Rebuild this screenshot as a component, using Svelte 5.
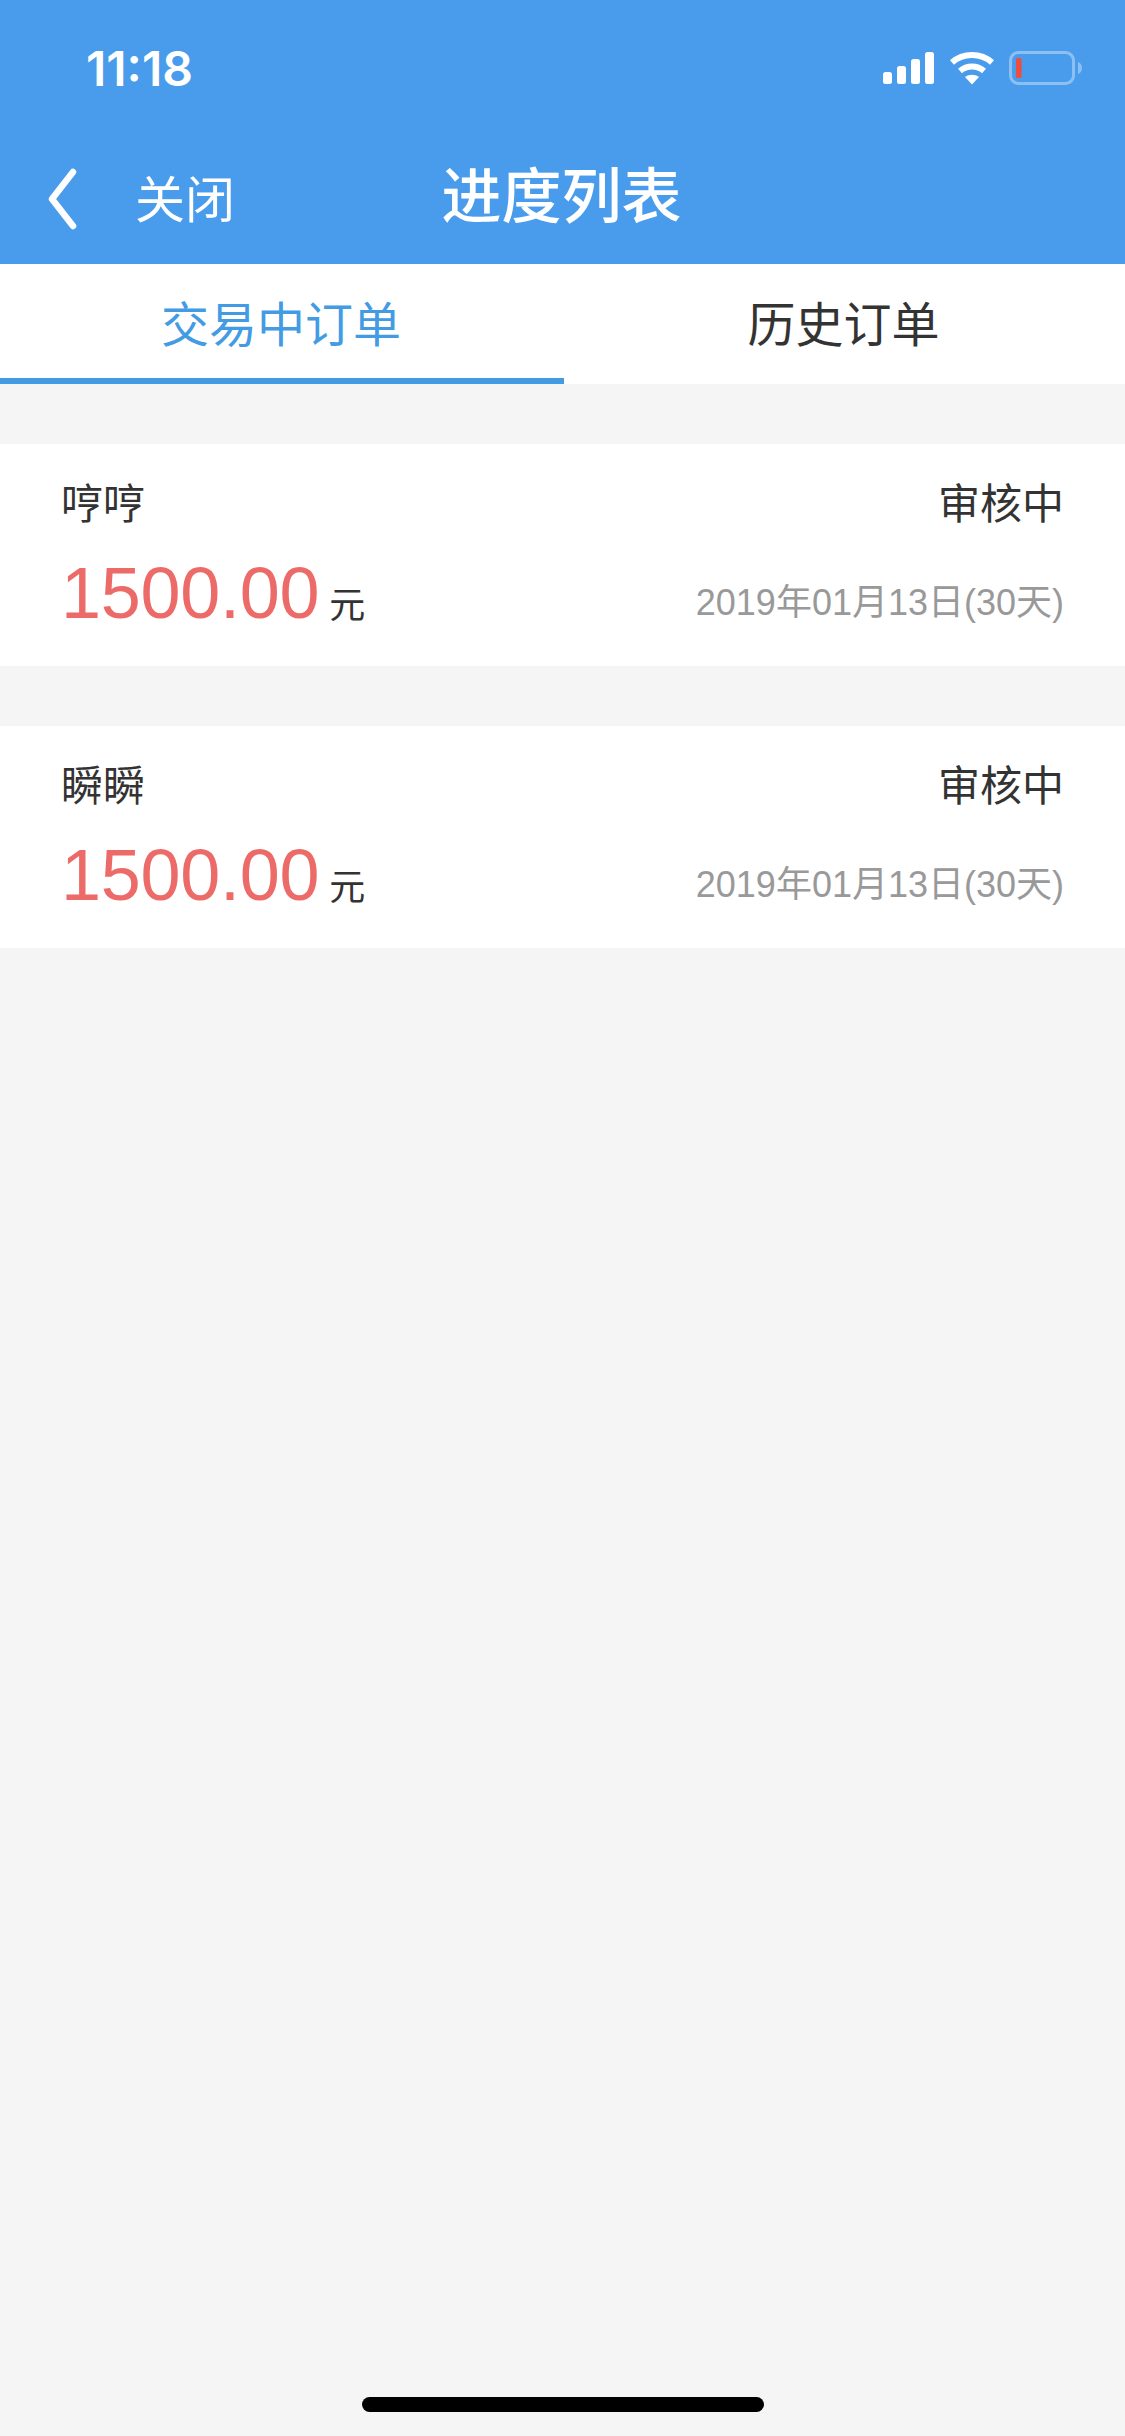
<script>
	const orders = [
		{ name: '哼哼', status: '审核中', amount: '1500.00', date: '2019年01月13日(30天)' },
		{ name: '瞬瞬', status: '审核中', amount: '1500.00', date: '2019年01月13日(30天)' }
	];
</script>

<div class="page">
	<header class="top">
		<div class="status">
			<span class="time">11:18</span>
			<div class="status-icons">
				<svg class="signal" width="52" height="32" viewBox="0 0 52 32">
					<rect x="0" y="20" width="9" height="12" rx="2.5" fill="#fff" />
					<rect x="14" y="14" width="9" height="18" rx="2.5" fill="#fff" />
					<rect x="28" y="7" width="9" height="25" rx="2.5" fill="#fff" />
					<rect x="42" y="0" width="9" height="32" rx="2.5" fill="#fff" />
				</svg>
				<svg class="wifi" width="46" height="34" viewBox="0 0 46 34">
					<path d="M3 11.5 C14 1.5 32 1.5 43 11.5" fill="none" stroke="#fff" stroke-width="6" />
					<path d="M11 20 C18 14 28 14 35 20" fill="none" stroke="#fff" stroke-width="6" />
					<path d="M16 26 C20 23 26 23 30 26 L23 33.5 Z" fill="#fff" />
				</svg>
				<svg class="battery" width="74" height="34" viewBox="0 0 74 34">
					<rect x="1.5" y="1.5" width="63" height="31" rx="8" fill="none" stroke="#8cc0f3" stroke-width="3" />
					<rect x="7" y="7" width="5.5" height="20" rx="1.5" fill="#ee4c3c" />
					<path d="M69 11 C72 12 73 15 73 17 C73 19 72 22 69 23 Z" fill="#8cc0f3" />
				</svg>
			</div>
		</div>
		<nav class="nav">
			<div class="back">
				<svg width="30" height="62" viewBox="0 0 30 62">
					<path d="M26 4 L5 31 L26 58" fill="none" stroke="#fff" stroke-width="6.5" stroke-linecap="round" stroke-linejoin="round" />
				</svg>
				<span>关闭</span>
			</div>
			<h1>进度列表</h1>
		</nav>
	</header>

	<div class="tabs">
		<div class="tab active">交易中订单</div>
		<div class="tab">历史订单</div>
	</div>

	<main class="list">
		{#each orders as order}
			<section class="card">
				<div class="row">
					<span class="name">{order.name}</span>
					<span class="state">{order.status}</span>
				</div>
				<div class="row lower">
					<span class="money"><b>{order.amount}</b><i>元</i></span>
					<span class="date">{order.date}</span>
				</div>
			</section>
		{/each}
	</main>

	<div class="home"><span></span></div>
</div>

<style>
	:global(body) {
		margin: 0;
		background: #f5f5f5;
	}
	.page {
		width: 1125px;
		height: 2436px;
		display: flex;
		flex-direction: column;
		background: #f5f5f5;
		font-family: 'Liberation Sans', 'Noto Sans CJK SC', sans-serif;
		overflow: hidden;
	}
	.top {
		height: 264px;
		background: #499ceb;
		color: #fff;
		flex: none;
	}
	.status {
		height: 132px;
		display: flex;
		justify-content: space-between;
		align-items: center;
		padding: 0 42px 0 86px;
		box-sizing: border-box;
	}
	.time {
		font-family: Inter, 'Liberation Sans', sans-serif;
		font-size: 48px;
		font-weight: 600;
		margin-top: 4px;
	}
	.status-icons {
		display: flex;
		align-items: center;
		gap: 14px;
		margin-top: 4px;
	}
	.nav {
		height: 132px;
		position: relative;
		display: flex;
		align-items: center;
		justify-content: center;
		padding-right: 2px;
	}
	.nav h1 {
		margin: 0;
		font-size: 60px;
		font-weight: 500;
		line-height: 1;
	}
	.back {
		position: absolute;
		left: 47px;
		top: 33px;
		display: flex;
		align-items: center;
		gap: 58px;
		font-size: 50px;
		line-height: 62px;
	}
	.back span {
		margin-top: 5px;
	}
	.back svg {
		display: block;
	}
	.tabs {
		height: 120px;
		flex: none;
		display: flex;
		background: #fff;
	}
	.tab {
		flex: 1;
		box-sizing: border-box;
		text-align: center;
		font-size: 48px;
		line-height: 124px;
		color: #333;
		padding-right: 2px;
	}
	.tab.active {
		color: #439ce3;
		border-bottom: 6px solid #439ce3;
		flex: 0 0 564px;
	}
	.list {
		flex: 1;
		display: flex;
		flex-direction: column;
		gap: 60px;
		padding-top: 60px;
	}
	.card {
		height: 222px;
		box-sizing: border-box;
		background: #fff;
		padding: 28px 61px 0;
	}
	.row {
		display: flex;
		justify-content: space-between;
		align-items: center;
		height: 56px;
		color: #333;
		font-size: 42px;
	}
	.row.lower {
		height: 80px;
		margin-top: 25px;
	}
	.money {
		display: flex;
		align-items: baseline;
	}
	.money b {
		font-weight: 400;
		font-size: 72px;
		color: #ec6b69;
		letter-spacing: -0.3px;
	}
	.money i {
		font-style: normal;
		font-size: 36px;
		color: #333;
		margin-left: 10px;
	}
	.date {
		font-size: 36px;
		color: #999;
		padding-top: 12px;
	}
	.home {
		flex: none;
		height: 39px;
		display: flex;
		justify-content: center;
	}
	.home span {
		width: 402px;
		height: 15px;
		border-radius: 8px;
		background: #000;
	}
</style>
